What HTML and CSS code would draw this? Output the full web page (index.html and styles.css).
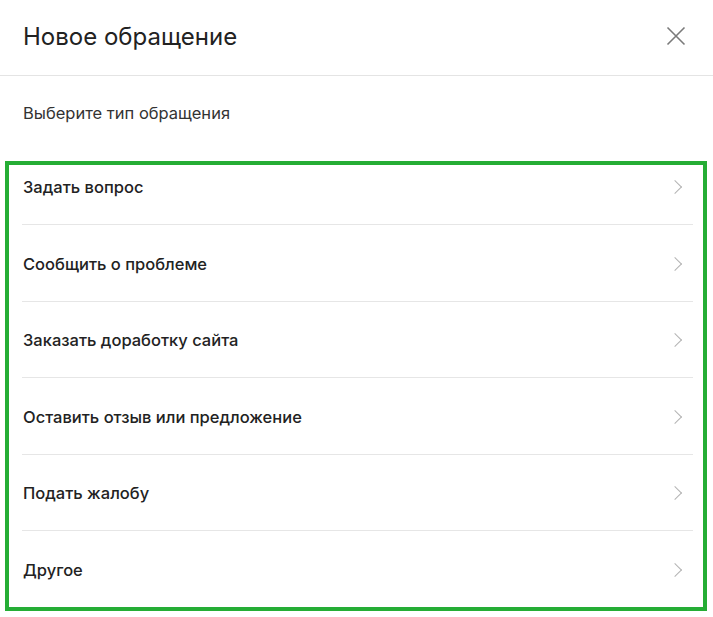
FILE: index.html
```html
<!DOCTYPE html>
<html lang="ru">
<head>
    <meta charset="UTF-8">
    <meta name="viewport" content="width=device-width, initial-scale=1.0">
    <title>Новое обращение</title>
    <link rel="stylesheet" href="styles.css">
</head>
<body>
    <header class="modal-head">
        <h1>Новое обращение</h1>
        <button class="close" aria-label="Закрыть">
            <svg width="20" height="20" viewBox="0 0 20 20"><path d="M1.5 1.5l17 17M18.5 1.5l-17 17" stroke="#7a7a7a" stroke-width="1.6" fill="none"/></svg>
        </button>
    </header>

    <p class="hint">Выберите тип обращения</p>

    <div class="types">
        <ul class="type-list">
            <li class="type">Задать вопрос<span class="chev"></span></li>
            <li class="type">Сообщить о проблеме<span class="chev"></span></li>
            <li class="type">Заказать доработку сайта<span class="chev"></span></li>
            <li class="type">Оставить отзыв или предложение<span class="chev"></span></li>
            <li class="type">Подать жалобу<span class="chev"></span></li>
            <li class="type">Другое<span class="chev"></span></li>
        </ul>
    </div>
</body>
</html>
```

FILE: styles.css
```css
body {
    margin: 0;
    background: #fff;
    font-family: Inter, "Noto Sans", Arial, sans-serif;
    color: #222;
}
.modal-head {
    border-bottom: 1px solid #e4e4e4;
    display: flex;
    align-items: center;
    justify-content: space-between;
    padding: 0 27px 0 23px;
    box-sizing: border-box;
    height: 76px;
}
.modal-head h1 {
    margin: 0 0 2px;
    font-size: 24px;
    font-weight: 400;
    color: #222;
}
.close {
    border: none;
    background: none;
    padding: 0;
    width: 20px;
    height: 20px;
    cursor: pointer;
    margin-bottom: 3px;
}
.hint {
    margin: 0;
    padding: 27px 23px 0;
    font-size: 16.5px;
    line-height: 20px;
    color: #333;
    height: 58px;
}
.types {
    margin: 0 6px 0 5px;
    border: 4px solid #25ad35;
    height: 442px;
    overflow: hidden;
}
.type-list {
    list-style: none;
    margin: 0 10px 0 13px;
    padding: 0;
}
.type {
    display: flex;
    justify-content: space-between;
    align-items: center;
    padding: 28.5px 10px 27px 1px;
    line-height: 20px;
    font-size: 16.5px;
    font-weight: 500;
    border-bottom: 1px solid #e6e6e6;
    cursor: pointer;
}
.type:first-child {
    padding-top: 12px;
}
.chev {
    width: 9px;
    height: 9px;
    border-top: 1.5px solid #b3b3b3;
    border-right: 1.5px solid #b3b3b3;
    transform: rotate(45deg);
    margin-right: 3px;
}
```
